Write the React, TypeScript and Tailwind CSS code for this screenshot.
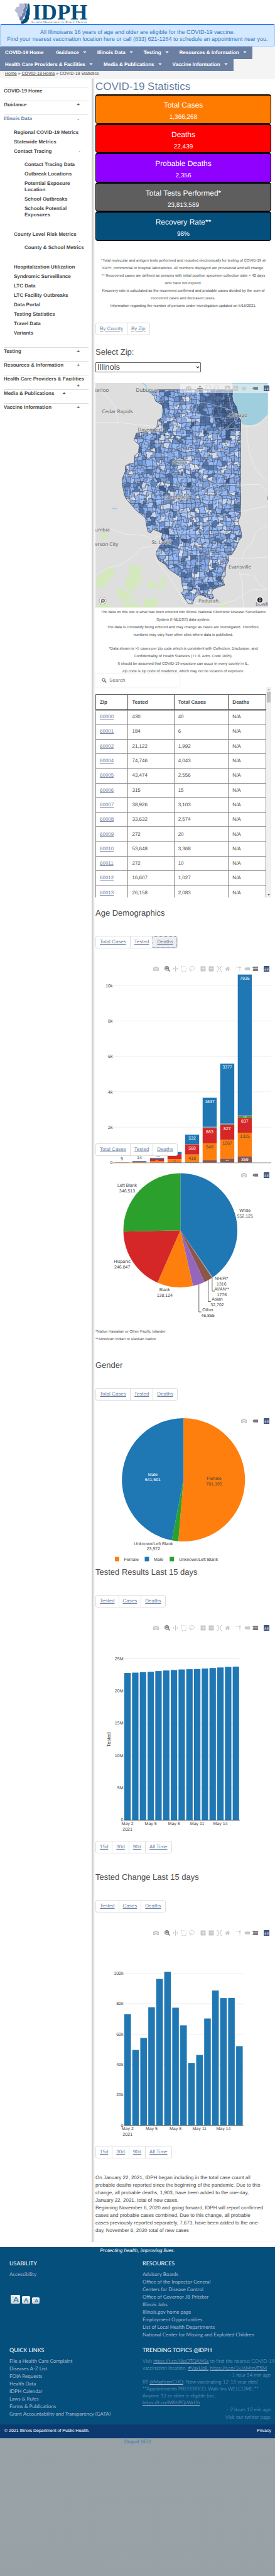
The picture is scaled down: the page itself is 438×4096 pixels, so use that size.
import React from "react";

/* ---------- shared data ---------- */

const NAV_ROWS = [
  [
    { label: "COVID-19 Home", menu: false },
    { label: "Guidance", menu: true },
    { label: "Illinois Data", menu: true },
    { label: "Testing", menu: true },
    { label: "Resources & Information", menu: true },
  ],
  [
    { label: "Health Care Providers & Facilities", menu: true },
    { label: "Media & Publications", menu: true },
    { label: "Vaccine Information", menu: true },
  ],
];

const CARDS = [
  { title: "Total Cases", value: "1,366,268", bg: "bg-[#ff7b00]" },
  { title: "Deaths", value: "22,439", bg: "bg-[#ff0000]" },
  { title: "Probable Deaths", value: "2,356", bg: "bg-[#9000ff]" },
  { title: "Total Tests Performed*", value: "23,813,589", bg: "bg-[#5e5e5e]" },
  { title: "Recovery Rate**", value: "98%", bg: "bg-[#054f7d]" },
];

const ZIPS = [
  ["60000", "430", "40"],
  ["60001", "184", "6"],
  ["60002", "21,122", "1,992"],
  ["60004", "74,746", "4,043"],
  ["60005", "43,474", "2,556"],
  ["60006", "315", "15"],
  ["60007", "38,926", "3,103"],
  ["60008", "33,632", "2,574"],
  ["60009", "272", "20"],
  ["60010", "53,648", "3,368"],
  ["60011", "272", "10"],
  ["60012", "16,607", "1,027"],
  ["60013", "26,158", "2,083"],
];

const BLUE = "#1f77b4";
const ORANGE = "#ff7f0e";
const GREEN = "#2ca02c";
const RED = "#d62728";
const PURPLE = "#9467bd";
const BROWN = "#8c564b";

/* ---------- chart toolbar ---------- */

const ICONS: Record<string, { box: string; d: string }> = {
  camera: {
    box: "0 0 1000 1000",
    d: "m500 450c-83 0-150-67-150-150 0-83 67-150 150-150 83 0 150 67 150 150 0 83-67 150-150 150z m400 150h-120c-16 0-34 13-39 29l-31 93c-6 15-23 28-40 28h-340c-16 0-34-13-39-28l-31-94c-6-15-23-28-40-28h-120c-55 0-100-45-100-100v-450c0-55 45-100 100-100h800c55 0 100 45 100 100v450c0 55-45 100-100 100z m-400-550c-138 0-250 112-250 250 0 138 112 250 250 250 138 0 250-112 250-250 0-138-112-250-250-250z m365 380c-19 0-35 16-35 35 0 19 16 35 35 35 19 0 35-16 35-35 0-19-16-35-35-35z",
  },
  zoom: {
    box: "0 0 1000 1000",
    d: "m1000-25l-250 251c40 63 63 138 63 218 0 224-182 406-407 406-224 0-406-182-406-406s183-406 407-406c80 0 155 22 218 62l250-250 125 125z m-812 250l0 438 437 0 0-438-437 0z m62 375l313 0 0-312-313 0 0 312z",
  },
  pan: {
    box: "0 0 1000 1000",
    d: "m1000 350l-187 188 0-125-250 0 0 250 125 0-188 187-187-187 125 0 0-250-250 0 0 125-188-188 186-187 0 125 252 0 0-250-125 0 187-188 188 188-125 0 0 250 250 0 0-126 187 188z",
  },
  plus: {
    box: "-60 0 1000 1000",
    d: "m1 787l0-875 875 0 0 875-875 0z m687-500l-187 0 0-187-125 0 0 187-188 0 0 125 188 0 0 187 125 0 0-187 187 0 0-125z",
  },
  minus: {
    box: "-60 0 1000 1000",
    d: "m0 788l0-876 875 0 0 876-875 0z m688-500l-500 0 0 125 500 0 0-125z",
  },
  home: {
    box: "-30 0 1000 1000",
    d: "m786 296v-267q0-15-11-26t-25-10h-214v214h-143v-214h-214q-15 0-25 10t-11 26v267q0 1 0 2t0 2l321 264 321-264q1-1 1-4z m124 39l-34-41q-5-5-12-6h-2q-7 0-12 3l-386 322-386-322q-7-4-13-4-7 2-12 7l-35 41q-4 5-3 13t6 12l401 334q18 15 42 15t43-15l136-114v109q0 8 5 13t13 5h107q8 0 13-5t5-13v-227l122-102q5-5 6-12t-4-13z",
  },
  tag: {
    box: "0 -250 1500 1500",
    d: "m375 725l0 0-375-375 375-374 0-1 1125 0 0 750-1125 0z",
  },
  tags: {
    box: "0 -60 1125 1125",
    d: "m187 786l0 2-187-188 188-187 0 0 937 0 0 373-938 0z m0-499l0 1-187-188 188-188 0 0 937 0 0 376-938-1z",
  },
};

function ToolIcon({ name }: { name: string }) {
  if (name === "select")
    return (
      <svg viewBox="0 0 9 9" className="size-[9px]" fill="none" stroke="currentColor" strokeWidth="1.1" strokeDasharray="1.2 1.4">
        <rect x=".6" y=".6" width="7.8" height="7.8" />
      </svg>
    );
  if (name === "lasso")
    return (
      <svg viewBox="0 0 18 18" className="size-[9px]" fill="none" stroke="currentColor" strokeWidth="1.8">
        <path d="M3.6 12.2C1.6 10.600 1.200 8 2 5.800 3.200 2.600 6.500 1 10 1c4 0 7 2.600 7 6s-3 6.300-6.800 6.300c-1.500 0-2.700-.3-3.900-.9" />
        <circle cx="4.600" cy="12.200" r="2" />
        <path d="M5.500 14c.6 1.300-.4 2.600-1.600 3" />
      </svg>
    );
  if (name === "scale")
    return (
      <svg viewBox="0 0 18 18" className="size-[9px]" fill="none" stroke="currentColor" strokeWidth="1.7">
        <path d="M1 5V1h4M13 1h4v4M17 13v4h-4M5 17H1v-4" />
        <path d="M4.500 4.500l9 9M13.500 4.500l-9 9" strokeWidth="2" />
        <path d="M4 8V4h4zM10 4h4v4zM14 10v4h-4zM8 14H4v-4z" fill="currentColor" stroke="none" />
      </svg>
    );
  if (name === "spike")
    return (
      <svg viewBox="0 0 18 18" className="size-[9px]" fill="currentColor">
        <path d="M0 3h3v2H0zM5 3h3v2H5zM11 9h2v3h-2zM11 14h2v3h-2z" />
        <circle cx="12" cy="4.300" r="3" />
      </svg>
    );
  if (name === "logo")
    return (
      <svg viewBox="0 0 132 132" className="size-[9px]">
        <rect width="132" height="132" rx="8" fill="#3f4f75" />
        <g fill="#80cfbe">
          <circle cx="30" cy="30" r="7" /><circle cx="54" cy="30" r="7" /><circle cx="78" cy="30" r="7" /><circle cx="102" cy="30" r="7" />
          <circle cx="30" cy="54" r="7" /><circle cx="78" cy="54" r="7" />
        </g>
        <path fill="#fff" d="M24 72h12v36H24zM48 48h12v60H48zM72 72h12v36H72zM96 48h12v60H96z" />
      </svg>
    );
  const icon = ICONS[name];
  return (
    <svg viewBox={icon.box} className="size-[9px]" fill="currentColor">
      <path d={icon.d} transform="matrix(1 0 0 -1 0 850)" />
    </svg>
  );
}

const FULL_BAR = [["camera"], ["zoom", "pan", "select", "lasso"], ["plus", "minus", "scale", "home"], ["spike", "tag", "tags"], ["logo"]];
const PIE_BAR = [["camera"], ["tag"], ["logo"]];
const MAP_BAR = [["camera"], ["pan", "select", "lasso"], ["plus", "minus", "home"], ["tag"], ["logo"]];

function ModeBar({ groups, active, map = false }: { groups: string[][]; active: string[]; map?: boolean }) {
  return (
    <div className={map ? "absolute top-px right-0 flex bg-white/50 py-[3px] pl-[2px] pr-px" : "absolute top-[7px] right-0 flex py-px pr-px"}>
      {groups.map((group, i) => (
        <div key={i} className="ml-[5px] flex">
          {group.map((name) => (
            <button key={name} type="button" aria-label={name} className={`flex w-[13px] justify-center ${active.includes(name) ? "text-[#7c7c7c]" : "text-[#c8c8c8]"}`}>
              <ToolIcon name={name} />
            </button>
          ))}
        </div>
      ))}
    </div>
  );
}

/* ---------- small parts ---------- */

function Tabs({ items, selected }: { items: string[]; selected?: string }) {
  return (
    <div className="inline-flex h-5 rounded-[3px] border border-[#ddd] bg-white align-top">
      {items.map((t, i) => (
        <a
          key={t}
          href="#"
          className={`px-[6px] text-[8px] leading-[18px] text-[#6b7fa3] underline ${i > 0 ? "border-l border-[#ddd]" : ""} ${
            t === selected ? "rounded-r-[2px] bg-[#eee] outline-1 -outline-offset-1 outline-dotted outline-[#6b7fa3]" : ""
          }`}
        >
          {t}
        </a>
      ))}
    </div>
  );
}

function Heading({ children, className }: { children: React.ReactNode; className: string }) {
  return <h2 className={`text-[13px] leading-4 text-[#4d4d4d] ${className}`}>{children}</h2>;
}

function Lines({ lines, className }: { lines: string[]; className: string }) {
  return (
    <p className={className}>
      {lines.map((l) => (
        <span key={l} className="block whitespace-nowrap">{l}</span>
      ))}
    </p>
  );
}

/* ---------- map ---------- */

const STATE =
  "M903 68H1328L1325 110 1330 140 1350 180 1357 215 1365 250 1373 262V865L1362 900 1358 915 1370 945 1378 985V1010L1365 1028 1352 1060 1345 1080 1322 1120 1305 1125V1160L1290 1190 1285 1230 1287 1250 1270 1280 1282 1315 1240 1330 1213 1345 1208 1365 1220 1395 1205 1405 1185 1395 1150 1378H1130L1110 1398 1098 1436 1075 1432 1060 1410 1035 1365 1050 1350 1040 1320 1035 1268 1000 1240 965 1215 945 1185 905 1155 890 1120 893 1100 915 1060 933 1040 920 1020 928 985 900 970 872 960 862 980 845 975 835 925 830 885 780 840 722 768 710 740 697 665 698 635 715 590V555L735 542 768 535V490L790 468 795 420 765 390 778 345 840 335 895 310 900 262 925 245 932 205 925 165 888 140 880 110 855 85 878 75Z";

function rand(a: number, b: number, c: number) {
  const v = Math.sin(a * 127.1 + b * 311.7 + c * 74.7) * 43758.5453;
  return v - Math.floor(v);
}

const SHADES = ["#92b8f8", "#92b8f8", "#8fb4f4", "#86abea", "#9bbcf6", "#7ea3df", "#86abea", "#d3ddee", "#c7d6f0", "#86abea", "#6b91cf", "#5076b0", "#a9c4f5"];
const DARK = ["#5479b4", "#4c70a8", "#466aa2", "#6088c4", "#4c70a8", "#3c5a8c", "#7ba1df"];

type Cell = { d: string; fill: string };

function mesh(x0: number, y0: number, x1: number, y1: number, step: number, seed: number, dark: boolean): Cell[] {
  const cols = Math.ceil((x1 - x0) / step);
  const rows = Math.ceil((y1 - y0) / (step * 1.1));
  const px = (i: number, j: number) => x0 + (i + (rand(i, j, seed) - 0.5) * 0.7) * step;
  const py = (i: number, j: number) => y0 + (j + (rand(i, j, seed + 1) - 0.5) * 0.7) * step * 1.1;
  const across = (i: number, j: number): number[][] => {
    const m = px(i, j) + (px(i + 1, j) - px(i, j)) * (0.3 + rand(i, j, seed + 2) * 0.4);
    const n = (rand(i, j, seed + 6) - 0.5) * step * 0.4;
    return [[px(i, j), py(i, j)], [m, py(i, j) + n], [m, py(i + 1, j)], [px(i + 1, j), py(i + 1, j)]];
  };
  const down = (i: number, j: number): number[][] => {
    const m = py(i, j) + (py(i, j + 1) - py(i, j)) * (0.3 + rand(i, j, seed + 3) * 0.4);
    const n = (rand(i, j, seed + 7) - 0.5) * step * 0.4;
    return [[px(i, j), py(i, j)], [px(i, j) + n, m], [px(i, j + 1), m], [px(i, j + 1), py(i, j + 1)]];
  };
  const out: Cell[] = [];
  for (let j = 0; j < rows; j++)
    for (let i = 0; i < cols; i++) {
      const pts = [...across(i, j), ...down(i + 1, j), ...across(i, j + 1).reverse(), ...down(i, j).reverse()];
      const cx = px(i, j);
      const cy = py(i, j);
      const nearCity =
        dark ||
        (cx > 1130 && cy < 330 && rand(i, j, seed + 5) < 0.75) ||
        (cx > 900 && cx < 1000 && cy > 950 && cy < 1090 && rand(i, j, seed + 5) < 0.6) ||
        rand(i, j, seed + 5) < 0.06;
      const set = nearCity ? DARK : SHADES;
      out.push({
        d: "M" + pts.map((p) => `${p[0].toFixed(1)} ${p[1].toFixed(1)}`).join("L") + "Z",
        fill: set[Math.floor(rand(i, j, seed + 4) * set.length)],
      });
    }
  return out;
}

const REGION_CELLS = mesh(690, 55, 1390, 1440, 25, 3, false);
const METRO_CELLS = mesh(1215, 60, 1380, 345, 13, 11, true);

const CITIES: [string, number, number, "start" | "middle"][] = [
  ["terloo", -1, 14, "start"],
  ["Dubuque", 82, 14, "middle"],
  ["Cedar Rapids", 35, 48, "middle"],
  ["Chicago", 227, 54, "middle"],
  ["Davenport", 87, 77, "middle"],
  ["Peoria", 134, 129, "middle"],
  ["Springfield", 131, 184, "middle"],
  ["umbia", -1, 236, "start"],
  ["erson City", -1, 259, "start"],
  ["St. Louis", 105, 256, "middle"],
  ["Evansville", 230, 295, "middle"],
  ["Paducah", 180, 349, "middle"],
  ["Bowli", 255, 354, "start"],
];

function ZipMap() {
  return (
    <div className="relative mt-[17px]">
      <svg viewBox="0 0 275 357" className="mr-[5px] block w-[calc(100%-5px)] bg-[#dedede]" role="img" aria-label="Cases by zip code">
        <defs>
          <clipPath id="state"><path d={STATE} /></clipPath>
          <clipPath id="metro"><path d="M1250 130L1300 90 1400 90 1400 330 1290 330 1230 290 1220 200z" /></clipPath>
        </defs>
        <g transform="scale(.2793 .2491) translate(-545 -25)">
          <path fill="#9fcfdf" d="M1326 25H1528V225Q1490 280 1450 292Q1410 300 1380 285L1365 250 1350 180 1325 110z" />
          <path fill="none" stroke="#9fcfdf" strokeWidth="7" d="M812 27Q838 35 836 60T855 85M640 824Q655 830 668 824M1250 1425L1275 1460M928 170L925 240" />
          <path fill="#d3e8bd" d="M585 985L605 970 620 1018 600 1010 592 1028 570 1020zM545 1270L585 1235 615 1200H650V1255L620 1280 615 1330 580 1320 570 1340 545 1315zM735 1190H805V1265L826 1285 795 1290V1335H757V1355H728V1332L712 1325 720 1265H740zM842 1305L855 1278 880 1312H920V1255L940 1248V1335H842zM670 1325L700 1345 730 1365 765 1385 775 1410 740 1405 700 1420 680 1400 670 1365zM820 1400H900V1425L888 1460H820zM700 1425H760L805 1440V1460H700zM560 1440L600 1420 628 1440V1460H565zM1250 1430L1280 1425 1292 1458H1262z" />
          <g fill="none" stroke="#f5f5f5" strokeWidth="2.500">
            <path d="M545 277H680L780 290 895 302M580 85L620 120 660 180 665 220 675 277M1528 230L1470 290 1410 305 1373 300M1410 305L1408 370 1425 480 1460 580 1528 660M1373 675L1480 672 1528 720M1373 845L1460 825 1528 808M545 960H640L720 990 820 997 880 1030 890 1005 930 1010M545 1250L620 1205 700 1180 770 1120 810 1075 880 1068M900 1070Q870 1120 905 1180L970 1270 1010 1340 1060 1440M1305 1140L1380 1145 1528 1137M1380 1145L1400 1090 1440 1040 1460 975 1528 932M1365 1235L1385 1300V1390L1390 1460M1365 1235L1380 1248 1435 1250M1450 1250L1480 1310 1528 1345M1100 1436L1180 1425 1260 1440 1340 1410 1430 1345 1528 1345" />
          </g>
          <g clipPath="url(#state)">
            <g stroke="#454a55" strokeWidth="2" strokeLinejoin="round">
              {REGION_CELLS.map((c, i) => <path key={i} d={c.d} fill={c.fill} />)}
            </g>
            <g clipPath="url(#metro)" stroke="#3b4252" strokeWidth="1.800">
              {METRO_CELLS.map((c, i) => <path key={i} d={c.d} fill={c.fill} />)}
            </g>
          </g>
          <path d={STATE} fill="none" stroke="#4a4f5a" strokeWidth="3" />
          <g fill="none" stroke="#fff" strokeOpacity=".75" strokeWidth="2.200">
            <path d="M1130 68L1128 145 1190 155 1290 185 1350 225M1128 145L1110 220 1112 480 1120 590M900 330L945 270 1040 245 1110 225 1225 245 1300 250M840 335L960 350 1120 357 1215 357 1270 320 1373 312M900 340V470L985 500 1040 545 1120 580 1170 630 1245 670 1373 675M1300 68L1318 180 1345 280M1345 260L1260 340 1230 400 1180 500 1120 590M1045 548L1050 660 1015 750 1010 890 965 1010 930 1040M735 700L730 768 900 780 960 765 1110 740 1190 690 1245 670M1373 845L1300 860 1215 905 1100 955 1000 1003 930 1010M1275 580L1245 670 1240 820 1215 905 1130 1030 1135 1150 1125 1290 1098 1350 1095 1436M930 1040L1050 1085 1130 1120 1305 1130" />
          </g>
        </g>
        <g className="font-['Open_Sans','Noto_Sans',sans-serif] text-[8px] font-medium" fill="#5d5d5d" stroke="#e2e2e2" strokeOpacity=".75" strokeWidth="1.200" style={{ paintOrder: "stroke" }}>
          {CITIES.map(([name, x, y, anchor]) => <text key={name} x={x} y={y} textAnchor={anchor}>{name}</text>)}
          <text x="273" y="186">I</text>
        </g>
        <circle cx="11.500" cy="346" r="5.500" fill="#fff" stroke="#888" strokeWidth=".7" />
        <path d="M9 349.500V346a3 3.200 0 1 1 3 3.200L9 349.500z" fill="#777" />
        <path d="M12 344.500v3M10.500 346h3" stroke="#fff" strokeWidth=".8" />
        <circle cx="262" cy="345" r="6.500" fill="#e9e9e9" />
        <circle cx="262" cy="345" r="4" fill="#222" />
        <path d="M262 342.300v1.200M262 344.500v3" stroke="#fff" strokeWidth="1.200" />
      </svg>
      <ModeBar groups={MAP_BAR} active={["pan", "tag"]} map />
    </div>
  );
}

/* ---------- charts ---------- */

type Segment = [number, string, string?, string?, boolean?];
const AGE_BARS: Segment[][] = [
  [[20, ORANGE]],
  [[30, ORANGE], [25, RED], [35, BLUE]],
  [[12, BROWN], [85, ORANGE], [117, RED, "117", "text-[3px]"], [62, BLUE]],
  [[25, BROWN], [172, ORANGE, "35", "text-[3px]", true], [287, RED, "287", "text-[4px]"], [120, BLUE]],
  [[45, BROWN], [418, ORANGE, "418", "text-[7px]", true], [568, RED, "568", "text-[7px]"], [15, PURPLE], [532, BLUE, "532", "text-[7px]"]],
  [[145, BROWN], [948, ORANGE, "948", "text-[7px]"], [863, RED, "863", "text-[7px]"], [35, GREEN], [35, PURPLE], [1637, BLUE, "1637", "text-[7px]"]],
  [[10, BLUE], [220, BROWN, "224", "text-[3px]", true], [1067, ORANGE, "1067", "text-[7px]"], [827, RED, "827", "text-[7px]"], [40, GREEN], [45, PURPLE], [3377, BLUE, "3377", "text-[7px]"]],
  [[10, BLUE], [359, BROWN, "359", "text-[7px]", true], [1325, ORANGE, "1325", "text-[7px]"], [837, RED, "837", "text-[7px]"], [103, GREEN, "103", "text-[3px]", true], [48, PURPLE], [7935, BLUE, "7935", "text-[7px]"]],
];

function AgeChart() {
  const zero = 320.7;
  const unit = 0.02817;
  return (
    <svg viewBox="0 0 280 328" className="block w-full" role="img" aria-label="Deaths by age group">
      {[2, 4, 6, 8, 10].map((k) => (
        <g key={k}>
          <path d={`M28 ${zero - k * 1000 * unit}H280`} stroke="#eee" />
          <text x="27.500" y={zero - k * 1000 * unit + 2.500} textAnchor="end" className="text-[7px]" fill="#444">{k}k</text>
        </g>
      ))}
      <text x="27.500" y={zero + 2} textAnchor="end" className="text-[7px]" fill="#444">0</text>
      {AGE_BARS.map((segs, i) => {
        let sum = 0;
        const x = 30.9 + i * 27.97;
        return (
          <g key={i}>
            {segs.map(([v, color, label, size, middle], n) => {
              sum += v;
              const top = zero - sum * unit;
              const h = v * unit;
              const small = size !== "text-[7px]";
              return (
                <g key={n}>
                  <rect x={x} y={top} width="22.400" height={h} fill={color} />
                  {label && (
                    <text x={x + 11.2} y={middle ? top + h / 2 + (small ? 1 : 2.5) : small ? top + 3 : top + 8} textAnchor="middle" className={size} fill={color === ORANGE ? "#444" : "#fff"}>
                      {label}
                    </text>
                  )}
                </g>
              );
            })}
          </g>
        );
      })}
      <path d={`M28 ${zero + 0.2}H280`} stroke="#555" strokeWidth=".6" />
      <text x="42" y="317" textAnchor="middle" className="text-[7px]" fill="#444">9</text>
      <text x="70" y="315" textAnchor="middle" className="text-[7px]" fill="#444">14</text>
      <text x="99" y="311" textAnchor="middle" className="text-[7px]" fill="#444">42</text>
    </svg>
  );
}

function Pie({ cx, cy, r, slices }: { cx: number; cy: number; r: number; slices: [number, string][] }) {
  const total = slices.reduce((s, [v]) => s + v, 0);
  let acc = 0;
  return (
    <g>
      {slices.map(([v, color], i) => {
        const a0 = (acc / total) * Math.PI * 2;
        acc += v;
        const a1 = (acc / total) * Math.PI * 2;
        const p = (a: number) => `${(cx + r * Math.sin(a)).toFixed(2)} ${(cy - r * Math.cos(a)).toFixed(2)}`;
        return <path key={i} fill={color} d={`M${cx} ${cy}L${p(a0)}A${r} ${r} 0 ${a1 - a0 > Math.PI ? 1 : 0} 1 ${p(a1)}Z`} />;
      })}
    </g>
  );
}

function PieLabel({ x, y, name, value, fill = "#444", gap = 8.7 }: { x: number; y: number; name: string; value: string; fill?: string; gap?: number }) {
  return (
    <text textAnchor="middle" className="text-[7px]" fill={fill}>
      <tspan x={x} y={y}>{name}</tspan>
      <tspan x={x} y={y + gap}>{value}</tspan>
    </text>
  );
}

function RaceChart() {
  return (
    <svg viewBox="0 0 280 248" className="block w-full" role="img" aria-label="Cases by race">
      <Pie
        cx={135.3}
        cy={100.3}
        r={90.8}
        slices={[[552125, BLUE], [1316, "#7f9fae"], [1776, "#7f7f7f"], [32702, BROWN], [46865, PURPLE], [138124, ORANGE], [246847, RED], [346513, GREEN]]}
      />
      <path fill="none" stroke="#444" strokeWidth=".8" d="M185.900 175.500V197H190M179.700 179V213.500H183.800M164.800 186V230H169" />
      <PieLabel x={50.5} y={31} name="Left Blank" value="346,513" />
      <PieLabel x={238.2} y={71} name="White" value="552,125" />
      <PieLabel x={42.7} y={152} name="Hispanic" value="246,847" />
      <PieLabel x={110.3} y={197} name="Black" value="138,124" />
      <PieLabel x={200.8} y={179} name="NH/PI*" value="1316" />
      <PieLabel x={201.3} y={196} name="AI/AN**" value="1776" />
      <PieLabel x={194} y={212} name="Asian" value="32,702" />
      <PieLabel x={179} y={229} name="Other" value="46,865" />
    </svg>
  );
}

function GenderChart() {
  return (
    <svg viewBox="0 0 280 240" className="block w-full" role="img" aria-label="Cases by gender">
      <Pie cx={140.2} cy={106} r={98} slices={[[701195, ORANGE], [23572, GREEN], [641501, BLUE]]} />
      <PieLabel x={91.3} y={99.5} name="Male" value="641,501" fill="#fff" />
      <PieLabel x={189} y={106} name="Female" value="701,195" />
      <PieLabel x={92.4} y={209.500} name="Unknown/Left Blank" value="23,572" />
      <path fill={ORANGE} d="M31 228.500h7v7h-7z" />
      <path fill={BLUE} d="M78.500 228.500h7v7h-7z" />
      <path fill={GREEN} d="M118.200 228.500h7v7h-7z" />
      <g className="text-[7px]" fill="#444">
        <text x="45.500" y="234.500">Female</text>
        <text x="93" y="234.500">Male</text>
        <text x="133" y="234.500">Unknown/Left Blank</text>
      </g>
    </svg>
  );
}

const TESTED = [22.81, 22.86, 22.92, 22.99, 23.1, 23.19, 23.27, 23.35, 23.39, 23.42, 23.49, 23.58, 23.66, 23.74, 23.79];
const CHANGE = [73.2, 49.6, 57.5, 77.7, 96.3, 101, 77.4, 65.8, 41.1, 46.3, 70.3, 88.7, 83.7, 83.8, 52.1];

function DailyChart({ values, ticks, unit, suffix, pitch, width, end, zero, title }: {
  values: number[]; ticks: number[]; unit: number; suffix: string; pitch: number; width: number; end: number; zero: number; title?: string;
}) {
  const first = 46;
  return (
    <svg viewBox="0 0 280 351" className="block w-full" role="img" aria-label="Daily results">
      {ticks.map((t) => (
        <g key={t}>
          <path d={`M45.500 ${zero - t * unit}H${end}`} stroke="#eee" />
          <text x="44.500" y={zero - t * unit + 2.2} textAnchor="end" className="text-[7px]" fill="#444">{t}{suffix}</text>
        </g>
      ))}
      <text x="44.500" y={zero + 2.2} textAnchor="end" className="text-[7px]" fill="#444">0</text>
      {values.map((v, i) => (
        <rect key={i} x={first + i * pitch} y={zero - v * unit} width={width} height={v * unit} fill={BLUE} />
      ))}
      <path d={`M45.500 ${zero}H${end}`} stroke="#555" strokeWidth=".8" />
      {["May 2", "May 5", "May 8", "May 11", "May 14"].map((d, i) => (
        <text key={d} x={first + width / 2 + i * 3 * pitch} y={zero + 7.3} textAnchor="middle" className="text-[7px]" fill="#444">{d}</text>
      ))}
      <text x={first + width / 2} y={zero + 16.3} textAnchor="middle" className="text-[7px]" fill="#444">2021</text>
      {title && <text transform="translate(23.500 190) rotate(-90)" textAnchor="middle" className="text-[8px]" fill="#444">{title}</text>}
    </svg>
  );
}

function Figure({ groups = FULL_BAR, active = ["zoom", "tags"], className = "", children }: {
  groups?: string[][]; active?: string[]; className?: string; children: React.ReactNode;
}) {
  return (
    <figure className={`relative ${className}`}>
      {children}
      <ModeBar groups={groups} active={active} />
    </figure>
  );
}

/* ---------- page regions ---------- */

function Logo() {
  return (
    <svg viewBox="0 0 130 38" className="ml-[23px] block h-[38px] w-[130px]" role="img" aria-label="Illinois Department of Public Health">
      <g transform="translate(-6.300 2.800) scale(.186)">
        <path fill="#054f7d" d="M146 15h14l6 40-1 55-8 12 1 28-9 6-4 14-15 10-19 8H94l-6-13 8-14 28-20-4-45 20-25z" />
        <path fill="#6f80aa" stroke="#fff" strokeWidth="3" d="M108 12h34l-2 24 6 16-10 20-6 22 2 16-20 22-6 28-16 4-14-8-2-26-18-6 4-8 30-12z" />
        <path fill="#b7bcd5" stroke="#fff" strokeWidth="3" d="M68 12h44l12 24-8 18-10 16 4 20-16 16 4 12-16 8-22-6v-20L44 88 35 70l10-12 2-12 22-4 8-14z" />
      </g>
      <path fill="#fff" d="M0 0h30v5.400H0z" />
      <text x="29" y="31" className="font-['Liberation_Serif','Times_New_Roman',serif] text-[35px] font-bold" fill="#054f7d">IDPH</text>
      <text x="27" y="37" className="font-['Liberation_Serif','Times_New_Roman',serif] text-[6px]" fill="#1d5c86">
        I<tspan className="text-[4px]">LLINOIS</tspan> D<tspan className="text-[4px]">EPARTMENT OF</tspan> P<tspan className="text-[4px]">UBLIC</tspan> H<tspan className="text-[4px]">EALTH</tspan>
      </text>
    </svg>
  );
}

function TopItem({ label, sign, children, wide = false, near = false, current = false }: {
  label: string; sign?: string; children?: React.ReactNode; wide?: boolean; near?: boolean; current?: boolean;
}) {
  return (
    <li className={`border-t border-[#ddd] ${wide ? "h-[23px]" : children ? "" : "h-[22px]"}`}>
      <div className={`flex leading-[11px] ${near ? "gap-[13px]" : "justify-between"} ${wide ? "flex-wrap" : ""} pr-[14px]`}>
        <a href="#" className={`whitespace-nowrap ${wide ? "basis-full" : ""} ${current ? "text-[#6b7fa3]" : ""}`}>{label}</a>
        {sign && <button type="button" className={`w-[5px] text-center font-bold ${wide ? "ml-auto" : ""}`}>{sign}</button>}
      </div>
      {children}
    </li>
  );
}

function SubLink({ children }: { children: string }) {
  return <li><a href="#" className="block whitespace-nowrap">{children}</a></li>;
}

function Sidebar() {
  return (
    <nav aria-label="Section" className="w-1/3 shrink-0 pt-[13px] pr-[5px] pl-[6px] text-[8px] font-bold text-[#4a4a4a]">
      <ul>
        <TopItem label="COVID-19 Home" />
        <TopItem label="Guidance" sign="+" />
        <TopItem label="Illinois Data" sign="-" current>
          <ul className="mt-3 mb-[17px] flex flex-col gap-[5px] pl-4 leading-[10px]">
            <SubLink>Regional COVID-19 Metrics</SubLink>
            <SubLink>Statewide Metrics</SubLink>
            <li>
              <div className="flex justify-between pr-[13px]"><a href="#">Contact Tracing</a><button type="button">-</button></div>
              <ul className="mt-[11px] mb-4 flex flex-col gap-[5px] pl-[17px]">
                <SubLink>Contact Tracing Data</SubLink>
                <SubLink>Outbreak Locations</SubLink>
                <li><a href="#">Potential Exposure<br />Location</a></li>
                <SubLink>School Outbreaks</SubLink>
                <li><a href="#">Schools Potential<br />Exposures</a></li>
              </ul>
            </li>
            <li>
              <a href="#" className="block whitespace-nowrap">County Level Risk Metrics</a>
              <div className="flex justify-end pr-[13px]"><button type="button">-</button></div>
              <ul className="mt-px mb-4 pl-[17px]">
                <SubLink>County & School Metrics</SubLink>
              </ul>
            </li>
            <SubLink>Hospitalization Utilization</SubLink>
            <SubLink>Syndromic Surveillance</SubLink>
            <SubLink>LTC Data</SubLink>
            <SubLink>LTC Facility Outbreaks</SubLink>
            <SubLink>Data Portal</SubLink>
            <SubLink>Testing Statistics</SubLink>
            <SubLink>Travel Data</SubLink>
            <SubLink>Variants</SubLink>
          </ul>
        </TopItem>
        <TopItem label="Testing" sign="+" />
        <TopItem label="Resources & Information" sign="+" />
        <TopItem label="Health Care Providers & Facilities" sign="+" wide />
        <TopItem label="Media & Publications" sign="+" near />
        <TopItem label="Vaccine Information" sign="+" />
      </ul>
    </nav>
  );
}

function ZipTable() {
  const head = "h-[24px] border border-[#555] border-b-[#444] px-[6px] text-left font-bold shadow-[0_1px_1px_#999]";
  const cell = "border border-[#888] px-[6px]";
  return (
    <div className="relative h-[335px] overflow-hidden pr-[8px]">
      <table className="mt-3 h-[328px] w-full border-collapse text-[8px] leading-[10px] text-[#4a4a4a]">
        <thead>
          <tr>
            <th className={`w-[19%] ${head}`}>Zip</th>
            <th className={`w-[27%] ${head}`}>Tested</th>
            <th className={`w-[32%] ${head}`}>Total Cases</th>
            <th className={`w-[22%] ${head}`}>Deaths</th>
          </tr>
        </thead>
        <tbody>
          {ZIPS.map(([zip, tested, cases]) => (
            <tr key={zip}>
              <td className={cell}><a href="#" className="text-[#6b7fa3] underline">{zip}</a></td>
              <td className={cell}>{tested}</td>
              <td className={cell}>{cases}</td>
              <td className={cell}>N/A</td>
            </tr>
          ))}
        </tbody>
      </table>
      <div className="absolute inset-y-0 right-0 flex w-[8px] flex-col items-center bg-[#f1f1f1]">
        <svg viewBox="0 0 8 8" className="size-2"><path d="M2 5.500h4L4 3.300z" fill="#a3a3a3" /></svg>
        <div className="h-[17px] w-[6px] bg-[#c1c1c1]" />
        <svg viewBox="0 0 8 8" className="mt-auto size-2"><path d="M2 2.800h4L4 5z" fill="#505050" /></svg>
      </div>
    </div>
  );
}

function LinkColumn({ title, links }: { title: string; links: string[] }) {
  return (
    <section>
      <h3 className="text-[9px] leading-3 text-white">{title}</h3>
      <ul className="mt-[5px] text-[8px] leading-3">
        {links.map((l) => <li key={l}><a href="#" className="whitespace-nowrap">{l}</a></li>)}
      </ul>
    </section>
  );
}

function SizeButton({ mark, className, text }: { mark: string; className: string; text: string }) {
  return (
    <button type="button" aria-label="Text size" className={`relative flex items-center justify-center rounded-[2px] bg-linear-to-b from-white to-[#c9ced3] font-['Lato',sans-serif] font-bold text-[#3386b8] ${className}`}>
      <span className={text}>A</span>
      {mark && <span className="absolute top-0 left-[2px] text-[5px] leading-[7px]">{mark}</span>}
    </button>
  );
}

function Footer() {
  return (
    <footer className="mt-2 bg-[#054f7d]">
      <p className="text-center text-[8px] leading-[11px] text-white italic">Protecting health, improving lives.</p>
      <div className="grid grid-cols-2 gap-x-2 gap-y-[13px] pt-[9px] pr-[7px] pb-[6px] pl-[15px] font-['Lato',sans-serif] text-[#a8b6cd]">
        <div>
          <LinkColumn title="USABILITY" links={["Accessibility"]} />
          <div className="mt-[27px] flex items-end gap-[3px] pl-[2px]">
            <SizeButton mark="+" className="h-[14px] w-[15px]" text="pl-[2px] text-[12px] leading-[14px]" />
            <SizeButton mark="" className="h-3 w-[13px]" text="text-[10px] leading-3" />
            <SizeButton mark="-" className="h-[10px] w-3" text="pl-[2px] text-[8px] leading-[10px]" />
          </div>
        </div>
        <LinkColumn
          title="RESOURCES"
          links={["Advisory Boards", "Office of the Inspector General", "Centers for Disease Control", "Office of Governor JB Pritzker", "Illinois Jobs", "Illinois.gov home page", "Employment Opportunities", "List of Local Health Departments", "National Center for Missing and Exploited Children"]}
        />
        <LinkColumn
          title="QUICK LINKS"
          links={["File a Health Care Complaint", "Diseases A-Z List", "FOIA Requests", "Health Data", "IDPH Calendar", "Laws & Rules", "Forms & Publications", "Grant Accountability and Transparency (GATA)"]}
        />
        <section>
          <h3 className="text-[9px] leading-3 text-white">TRENDING TOPICS @IDPH</h3>
          <div className="mt-[6px] text-[8px] leading-[11px] font-light whitespace-nowrap text-[#8db4d3]">
            <p>Visit <a href="#" className="text-[#a8b6cd] underline">https://t.co/I8pOTQAMSs</a> to find the nearest COVID-19<br />vaccination location. <a href="#" className="text-[#a8b6cd] underline">#VaxUpIL</a> <a href="#" className="text-[#a8b6cd] underline">https://t.co/1kJ6MmvT5M</a></p>
            <p className="text-right">- <em>1 hour 54 min</em> ago</p>
            <p>RT <a href="#" className="text-[#a8b6cd] underline">@MadisonCHD</a>: Now vaccinating 12-15 year olds!<br />**Appointments PREFERRED, Walk-Ins WELCOME.**<br />Anyone 12 or older is eligible (no…<br /><a href="#" className="text-[#a8b6cd] underline">https://t.co/M8hPQrWrUh</a></p>
            <p className="text-right">- <em>2 hours 12 min</em> ago</p>
            <p className="text-right leading-3"><a href="#">Visit our twitter page</a></p>
          </div>
        </section>
      </div>
      <div className="flex h-[22px] items-center justify-between bg-[#0c3a70] pr-[6px] pl-[7px] text-[7px] text-white">
        <p>© 2021 Illinois Department of Public Health.</p>
        <a href="#">Privacy</a>
      </div>
    </footer>
  );
}

export default function App() {
  return (
    <div className="min-h-screen overflow-hidden bg-linear-to-b from-[#9aa5ab] to-[#97a1a6] font-['Liberation_Sans',Arial,sans-serif] [text-rendering:geometricPrecision]">
      <div className="bg-white">
        <header>
          <Logo />
          <div className="h-9 rounded-[3px] border border-t-2 border-[#9fcbfb] border-t-[#337eff] bg-[#d4e8ff] pt-[6px] text-center text-[9px] leading-[11px] whitespace-nowrap text-[#3a7db8]">
            <a href="#">All Illinoisans 16 years of age and older are eligible for the COVID-19 vaccine.<br />Find your nearest vaccination location here or call (833) 621-1284 to schedule an appointment near you.</a>
          </div>
          <div className="rounded-b-[3px] bg-[#f4f4f4]">
            <nav aria-label="Main" className="flex h-[39px] flex-col items-start">
              {NAV_ROWS.map((row, i) => (
                <ul key={i} className="flex flex-1 items-center bg-[#6b7fa3] text-[8px] leading-[10px] font-bold whitespace-nowrap text-white">
                  {row.map(({ label, menu }) => (
                    <li key={label} className={menu ? "pr-[9px] pl-2" : "pr-3 pl-2"}>
                      <a href="#" className="flex items-center gap-[6px]">
                        {label}
                        {menu && <svg viewBox="0 0 6 4" className="mb-[2px] h-1 w-[6px]"><path d="M.2.500h5.600L3 3.700z" fill="#e8ecf3" /></svg>}
                      </a>
                    </li>
                  ))}
                </ul>
              ))}
            </nav>
            <p className="h-3 pl-2 text-[7px] leading-[9px] text-[#4a4a4a]">
              <a href="#" className="underline">Home</a> » <a href="#" className="underline">COVID-19 Home</a> » COVID-19 Statistics
            </p>
          </div>
        </header>

        <div className="flex">
          <Sidebar />
          <main className="min-w-0 flex-1 border-l border-[#c4c4c4] pt-[3px] pr-[6px] pb-3 pl-[5px] shadow-[inset_3px_0_3px_-1px_#ccc]">
            <h1 className="text-[17px] leading-5 whitespace-nowrap text-[#6b7fa3]">COVID-19 Statistics</h1>
            <div className="mt-[2px] grid h-[233px] grid-rows-5">
              {CARDS.map((c) => (
                <div key={c.title} className={`flex flex-col items-center rounded-[4px] border border-t-2 border-black pt-2 text-white ${c.bg}`}>
                  <div className="text-[12px] leading-[14px]">{c.title}</div>
                  <div className="mt-[7px] text-[10px] leading-3">{c.value}</div>
                </div>
              ))}
            </div>
            <Lines
              className="mt-[26px] flex flex-col items-center text-[6px] leading-3 text-[#4a4a4a]"
              lines={[
                "*Total molecular and antigen tests performed and reported electronically for testing of COVID-19 at",
                "IDPH, commercial or hospital laboratories. All numbers displayed are provisional and will change.",
                "** Recovered cases are defined as persons with initial positive specimen collection date > 42 days",
                "who have not expired.",
                "Recovery rate is calculated as the recovered confirmed and probable cases divided by the sum of",
                "recovered cases and deceased cases.",
                "Information regarding the number of persons under investigation updated on 5/16/2021.",
              ]}
            />
            <div className="mt-5 h-5"><Tabs items={["By County", "By Zip"]} /></div>
            <label htmlFor="zip" className="mt-[19px] block text-[13px] leading-4 text-[#4d4d4d]">Select Zip:</label>
            <div className="relative mt-2 w-3/5">
              <select id="zip" className="block h-4 w-full appearance-none rounded-[1px] border border-[#666] bg-white pl-[2px] text-[13px] leading-[14px] text-[#4a4a4a]">
                <option>Illinois</option>
              </select>
              <svg viewBox="0 0 6 4" className="pointer-events-none absolute top-[6px] right-[2px] h-1 w-[6px]" fill="none" stroke="#333" strokeWidth="1.200"><path d="M.8.700L3 3l2.200-2.300" /></svg>
            </div>

            <ZipMap />
            <Lines
              className="mt-[2px] flex flex-col items-center text-[6px] leading-3 text-[#4a4a4a]"
              lines={[
                "The data on this site is what has been entered into Illinois’ National Electronic Disease Surveillance",
                "System (I-NEDSS) data system.",
                "The data is constantly being entered and may change as cases are investigated.  Therefore,",
                "numbers may vary from other sites where data is published.",
              ]}
            />
            <Lines
              className="mt-[10px] flex flex-col items-center text-[6px] leading-3 text-[#4a4a4a]"
              lines={[
                "*Data shown is >5 cases per zip code which is consistent with Collection, Disclosure, and",
                "Confidentiality of Health Statistics (77 Ill. Adm. Code 1005).",
                "It should be assumed that COVID-19 exposure can occur in every county in IL.",
                "Zip code is zip code of residence, which may not be location of exposure.",
              ]}
            />
            <label className="relative -mt-[2px] flex h-5 w-[134px] items-center gap-1 rounded-[2px] bg-white pl-[10px] shadow-[0_0_3px_#ddd]">
              <svg viewBox="0 0 16 16" className="size-2 shrink-0" fill="none" stroke="#4a4a4a" strokeWidth="2"><circle cx="6" cy="6" r="4.500" /><path d="M9.500 9.500l5 5" strokeWidth="2.400" /></svg>
              <input type="text" aria-label="Search" placeholder="Search" className="min-w-0 flex-1 text-[8px] leading-[10px] placeholder:text-[#757575]" />
            </label>
            <ZipTable />

            <Heading className="mt-[17px]">Age Demographics</Heading>
            <div className="mt-7 h-5"><Tabs items={["Total Cases", "Tested", "Deaths"]} selected="Deaths" /></div>
            <Figure className="mt-5">
              <AgeChart />
              <div className="absolute top-[290px] left-0"><Tabs items={["Total Cases", "Tested", "Deaths"]} /></div>
            </Figure>
            <Figure groups={PIE_BAR} active={["tag"]}><RaceChart /></Figure>
            <Lines className="mt-2 text-[6px] leading-3 text-[#4a4a4a]" lines={["*Native Hawaiian or Other Pacific Islander", "**American Indian or Alaskan Native"]} />

            <Heading className="mt-[27px]">Gender</Heading>
            <div className="mt-7 h-5"><Tabs items={["Total Cases", "Tested", "Deaths"]} /></div>
            <Figure groups={PIE_BAR} active={["tag"]} className="mt-5"><GenderChart /></Figure>

            <Heading className="mt-[5px]">Tested Results Last 15 days</Heading>
            <div className="mt-7 h-5"><Tabs items={["Tested", "Cases", "Deaths"]} /></div>
            <Figure className="mt-5">
              <DailyChart values={TESTED} ticks={[5, 10, 15, 20, 25]} unit={10.264} suffix="M" pitch={12.33} width={10.2} end={229.8} zero={318.2} title="Tested" />
            </Figure>
            <div className="h-5"><Tabs items={["15d", "30d", "90d", "All Time"]} /></div>

            <Heading className="mt-[30px]">Tested Change Last 15 days</Heading>
            <div className="mt-7 h-5"><Tabs items={["Tested", "Cases", "Deaths"]} /></div>
            <Figure className="mt-5">
              <DailyChart values={CHANGE} ticks={[20, 40, 60, 80, 100]} unit={2.418} suffix="k" pitch={12.72} width={10.5} end={235.5} zero={318.5} />
            </Figure>
            <div className="h-5"><Tabs items={["15d", "30d", "90d", "All Time"]} /></div>

            <Lines
              className="mt-[25px] text-[8px] leading-3 text-[#4a4a4a]"
              lines={[
                "On January 22, 2021, IDPH began including in the total case count all",
                "probable deaths reported since the beginning of the pandemic. Due to this",
                "change, all probable deaths, 1,903, have been added to the one-day,",
                "January 22, 2021, total of new cases.",
                "Beginning November 6, 2020 and going forward, IDPH will report confirmed",
                "cases and probable cases combined. Due to this change, all probable",
                "cases previously reported separately, 7,673, have been added to the one-",
                "day, November 6, 2020 total of new cases",
              ]}
            />
          </main>
        </div>
        <Footer />
      </div>
      <p className="text-center text-[8px] leading-3 text-[#3a7db8]"><a href="#">Drupal SEO</a></p>
    </div>
  );
}
